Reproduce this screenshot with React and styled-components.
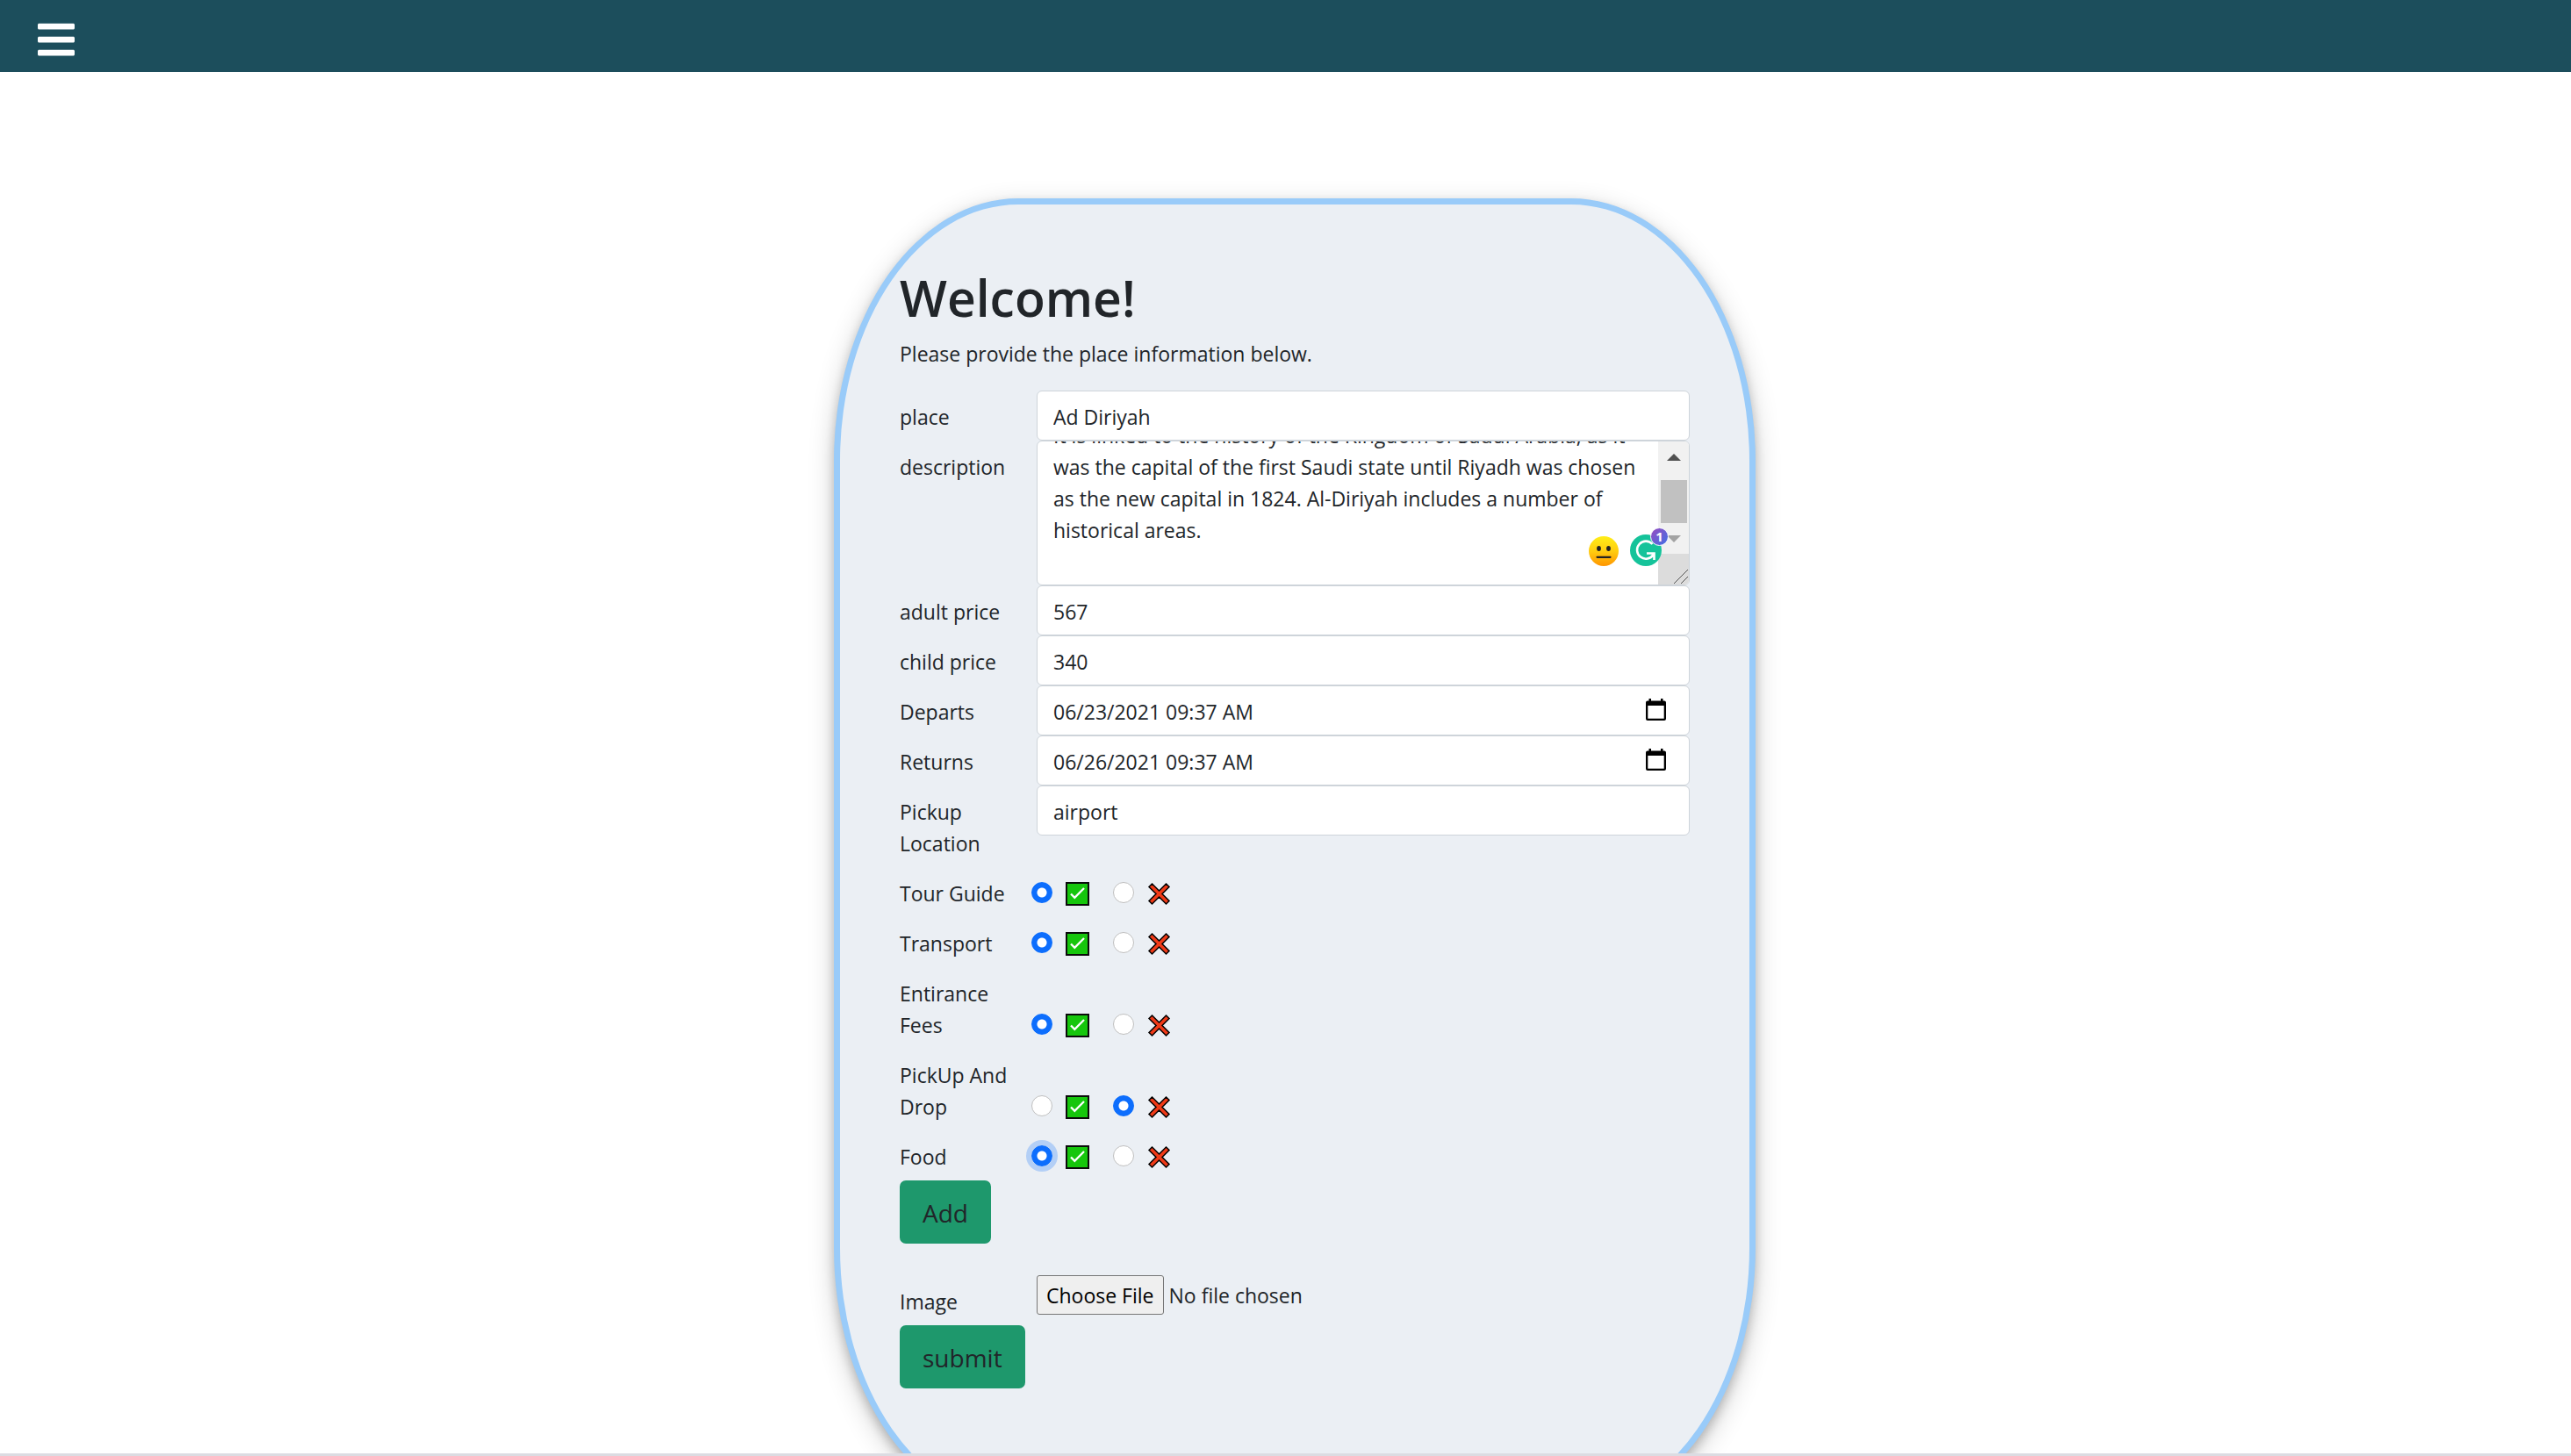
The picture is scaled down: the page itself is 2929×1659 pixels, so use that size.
import React, { useLayoutEffect, useRef } from "react";
import styled, { createGlobalStyle, css } from "styled-components";
import { FaBars } from "react-icons/fa";

const GlobalStyle = createGlobalStyle`
  *, *::before, *::after { box-sizing: border-box; }
  body {
    margin: 0;
    background: #fff;
    color: #212529;
    font-family: "Open Sans", "Noto Sans", sans-serif;
    font-size: 23px;
    line-height: 36px;
  }
`;

const Page = styled.div`
  display: flex;
  flex-direction: column;
  height: 100vh;
  overflow: hidden;
  border-bottom: 3px solid #dcdce2;
`;

const Navbar = styled.header`
  display: flex;
  flex: none;
  align-items: center;
  height: 82px;
  padding: 0 40px;
  background: #1c4e5c;
`;

const MenuButton = styled.button`
  display: flex;
  padding: 8px 0 0;
  border: 0;
  background: none;
  color: #fff;
  font-size: 48px;
`;

const Content = styled.main`
  display: flex;
  flex: 1;
  align-items: flex-start;
  justify-content: center;
  min-height: 0;
  padding: 144px 0 0 21px;
  overflow: hidden;
`;

const Card = styled.section`
  flex: none;
  width: 1050px;
  max-width: 100%;
  padding: 70px 68px 132px;
  border: 7px solid #99cbf9;
  border-radius: 20%;
  background: #ebeff4;
  box-shadow: 0 6px 12px rgba(0, 0, 0, 0.2), 0 9px 30px rgba(0, 0, 0, 0.19);
`;

const Title = styled.h1`
  margin: 0 0 10px;
  font-size: 57px;
  font-weight: 600;
  line-height: 72px;
`;

const Intro = styled.p`
  margin: 0 0 24px;
`;

const Row = styled.div`
  display: grid;
  grid-template-columns: 156px 1fr;
  align-items: start;
`;

const labelText = css`
  padding: 12px 18px 9px 0;
`;

const Label = styled.label`
  ${labelText}
`;

const control = css`
  width: 100%;
  border: 1px solid #ced4da;
  border-radius: 6px;
  background: #fff;
  color: #212529;
  font: inherit;
`;

const Input = styled.input`
  ${control}
  display: block;
  height: 57px;
  padding: 11px 18px 9px;
  outline: 0;
`;

const DateBox = styled.div`
  ${control}
  display: flex;
  align-items: center;
  height: 57px;
  padding: 2px 26px 0 18px;
`;

const DateInput = styled.input`
  flex: 1;
  min-width: 0;
  padding: 0;
  border: 0;
  outline: 0;
  background: none;
  color: inherit;
  font: inherit;
`;

const IconButton = styled.button`
  display: flex;
  padding: 0 0 4px;
  border: 0;
  background: none;
  color: #000;
`;

const TextBox = styled.div`
  ${control}
  position: relative;
  display: flex;
  height: 165px;
  overflow: hidden;
`;

const TextArea = styled.textarea`
  flex: 1;
  min-width: 0;
  padding: 10px 16px 8px 18px;
  border: 0;
  outline: 0;
  resize: none;
  background: none;
  color: inherit;
  font: inherit;
  scrollbar-width: none;
`;

const ScrollTrack = styled.div`
  display: flex;
  flex-direction: column;
  align-items: center;
  width: 35px;
  background: #f1f1f1;
`;

const ScrollArrow = styled.span`
  display: flex;
  align-items: center;
  justify-content: center;
  height: 35px;
  color: ${(p) => (p.$muted ? "#a3a3a3" : "#505050")};
`;

const ScrollThumb = styled.span`
  width: 30px;
  height: 49px;
  margin-top: auto;
  background: #c1c1c1;
`;

const ResizeCorner = styled.span`
  display: flex;
  align-items: flex-end;
  justify-content: flex-end;
  width: 100%;
  height: 35px;
  background: #dcdcdc;
`;

const Helpers = styled.div`
  position: absolute;
  right: 24px;
  bottom: 21px;
  display: flex;
  align-items: flex-end;
  gap: 13px;
`;

const HelperIcon = styled.svg`
  display: block;
  overflow: visible;
`;

const RadioSet = styled.fieldset`
  display: grid;
  grid-template-columns: 150px 1fr;
  align-items: end;
  margin: 0;
  padding: 0;
  border: 0;
`;

const Choices = styled.div`
  display: flex;
  gap: 27px;
  height: 40px;
`;

const Choice = styled.label`
  display: flex;
  align-items: flex-start;
  gap: 15px;
`;

const Radio = styled.input`
  appearance: none;
  width: 24px;
  height: 24px;
  margin: 0;
  border: 1px solid #bfbfbf;
  border-radius: 50%;
  background: #fff;
  outline: 0;

  &:checked {
    border-color: #0d6efd;
    background: radial-gradient(circle, #fff 5px, #0d6efd 6px);
  }

  &:focus {
    box-shadow: 0 0 0 6px rgba(13, 110, 253, 0.25);
  }
`;

const Button = styled.button`
  display: block;
  height: 72px;
  margin-bottom: ${(p) => (p.$spaced ? "36px" : "0")};
  padding: 2px 26px 0;
  border: 0;
  border-radius: 7px;
  background: #1e986c;
  color: #212529;
  font: inherit;
  font-size: 28px;
`;

const FileInput = styled.input`
  width: 100%;
  color: #212529;
  font: inherit;

  &::file-selector-button {
    height: 45px;
    margin: 0 6px 0 0;
    padding: 0 10px;
    border: 1px solid #767676;
    border-radius: 3px;
    background: #efefef;
    color: #000;
    font: inherit;
  }
`;

const CalendarIcon = () => (
  <svg width="23" height="25" viewBox="0 0 23 25" aria-hidden="true">
    <path
      fill="currentColor"
      fillRule="evenodd"
      d="M3.500 0H6v2.500h11V0h2.500v2.500H21q2 0 2 2V23q0 2-2 2H2q-2 0-2-2V4.500q0-2 2-2h1.500zM2.300 8v14.700h18.400V8z"
    />
  </svg>
);

const CheckMark = () => (
  <svg width="27" height="27" viewBox="0 0 27 27" role="img" aria-label="yes">
    <rect x="1" y="1" width="25" height="25" fill="#16c60c" stroke="#0b0b0b" strokeWidth="2" />
    <path d="M6 13.500l4.300 4.300L21 7" fill="none" stroke="#fff" strokeWidth="2.300" />
  </svg>
);

const CrossMark = () => (
  <svg width="27" height="27" viewBox="0 0 27 27" role="img" aria-label="no">
    <path
      d="M5.500 2.500l8 8 8-8L25 6l-8 8 8 8-3.500 3.500-8-8-8 8L2 22l8-8-8-8z"
      fill="#f03a17"
      stroke="#000"
      strokeWidth="1.500"
      transform="translate(0 -0.500)"
    />
  </svg>
);

const FaceIcon = () => (
  <HelperIcon width="34" height="34" viewBox="0 0 34 34" aria-hidden="true">
    <defs>
      <linearGradient id="face" x1="0" y1="0" x2="0" y2="1">
        <stop offset="0" stopColor="#ffee17" />
        <stop offset="0.5" stopColor="#ffcd10" />
        <stop offset="1" stopColor="#ff9500" />
      </linearGradient>
    </defs>
    <circle cx="17" cy="17" r="17" fill="url(#face)" />
    <ellipse cx="11.500" cy="14" rx="2.400" ry="3" fill="#222" />
    <ellipse cx="22.500" cy="14" rx="2.400" ry="3" fill="#222" />
    <path d="M9.500 23.800h15" stroke="#222" strokeWidth="2.200" strokeLinecap="round" />
  </HelperIcon>
);

const AssistantIcon = () => (
  <HelperIcon width="43" height="43" viewBox="0 0 43 43" role="img" aria-label="1 suggestion">
    <defs>
      <linearGradient id="count" x1="0" y1="0" x2="1" y2="1">
        <stop offset="0" stopColor="#9a4abf" />
        <stop offset="1" stopColor="#3f72e6" />
      </linearGradient>
    </defs>
    <circle cx="18" cy="25" r="18" fill="#15c39a" />
    <path
      d="M25.500 18A10 10 0 1 0 26.500 30M19 28.500h8.500v7.500"
      fill="none"
      stroke="#fff"
      strokeWidth="2.600"
    />
    <circle cx="33.500" cy="9.500" r="10" fill="url(#count)" stroke="#fff" />
    <text x="33.500" y="15" textAnchor="middle" fill="#fff" fontSize="15" fontWeight="700">
      1
    </text>
  </HelperIcon>
);

const Arrow = ({ down }) => (
  <svg width="16" height="8" viewBox="0 0 16 8" aria-hidden="true">
    <path d={down ? "M0 0h16l-8 8z" : "M0 8h16L8 0z"} fill="currentColor" />
  </svg>
);

const DESCRIPTION =
  "It is linked to the history of the Kingdom of Saudi Arabia, as it was the capital of the first Saudi state until Riyadh was chosen as the new capital in 1824. Al-Diriyah includes a number of historical areas.\n";

function Description() {
  const ref = useRef(null);

  useLayoutEffect(() => {
    ref.current.scrollTop = ref.current.scrollHeight;
  }, []);

  return (
    <Row>
      <Label htmlFor="description">description</Label>
      <TextBox>
        <TextArea id="description" ref={ref} defaultValue={DESCRIPTION} spellCheck={false} />
        <ScrollTrack aria-hidden="true">
          <ScrollArrow>
            <Arrow />
          </ScrollArrow>
          <ScrollThumb />
          <ScrollArrow $muted>
            <Arrow down />
          </ScrollArrow>
          <ResizeCorner>
            <svg width="18" height="18" viewBox="0 0 18 18">
              <path d="M1 17L17 1M9 17l8-8" stroke="#555" fill="none" />
            </svg>
          </ResizeCorner>
        </ScrollTrack>
        <Helpers>
          <FaceIcon />
          <AssistantIcon />
        </Helpers>
      </TextBox>
    </Row>
  );
}

function TextField({ id, label, value, type = "text" }) {
  return (
    <Row>
      <Label htmlFor={id}>{label}</Label>
      <Input id={id} type={type} defaultValue={value} />
    </Row>
  );
}

function DateField({ id, label, value }) {
  return (
    <Row>
      <Label htmlFor={id}>{label}</Label>
      <DateBox>
        <DateInput id={id} type="text" defaultValue={value} />
        <IconButton type="button" aria-label={`Pick ${label} date`}>
          <CalendarIcon />
        </IconButton>
      </DateBox>
    </Row>
  );
}

const Legend = styled.span`
  ${labelText}
`;

function RadioField({ name, label, value, focused }) {
  return (
    <RadioSet aria-labelledby={`${name}-label`}>
      <Legend id={`${name}-label`}>{label}</Legend>
      <Choices>
        <Choice>
          <Radio type="radio" name={name} defaultChecked={value} autoFocus={focused} />
          <CheckMark />
        </Choice>
        <Choice>
          <Radio type="radio" name={name} defaultChecked={!value} />
          <CrossMark />
        </Choice>
      </Choices>
    </RadioSet>
  );
}

export default function App() {
  return (
    <Page>
      <GlobalStyle />
      <Navbar>
        <MenuButton type="button" aria-label="Menu">
          <FaBars />
        </MenuButton>
      </Navbar>
      <Content>
        <Card>
          <Title>Welcome!</Title>
          <Intro>Please provide the place information below.</Intro>
          <form onSubmit={(e) => e.preventDefault()}>
            <TextField id="place" label="place" value="Ad Diriyah" />
            <Description />
            <TextField id="adult" label="adult price" value="567" type="number" />
            <TextField id="child" label="child price" value="340" type="number" />
            <DateField id="departs" label="Departs" value="06/23/2021 09:37 AM" />
            <DateField id="returns" label="Returns" value="06/26/2021 09:37 AM" />
            <TextField id="pickup" label="Pickup Location" value="airport" />
            <RadioField name="guide" label="Tour Guide" value />
            <RadioField name="transport" label="Transport" value />
            <RadioField name="fees" label="Entirance Fees" value />
            <RadioField name="pickdrop" label="PickUp And Drop" value={false} />
            <RadioField name="food" label="Food" value focused />
            <Button type="button" $spaced>
              Add
            </Button>
            <Row>
              <Label htmlFor="image">Image</Label>
              <FileInput id="image" type="file" />
            </Row>
            <Button type="submit">submit</Button>
          </form>
        </Card>
      </Content>
    </Page>
  );
}
